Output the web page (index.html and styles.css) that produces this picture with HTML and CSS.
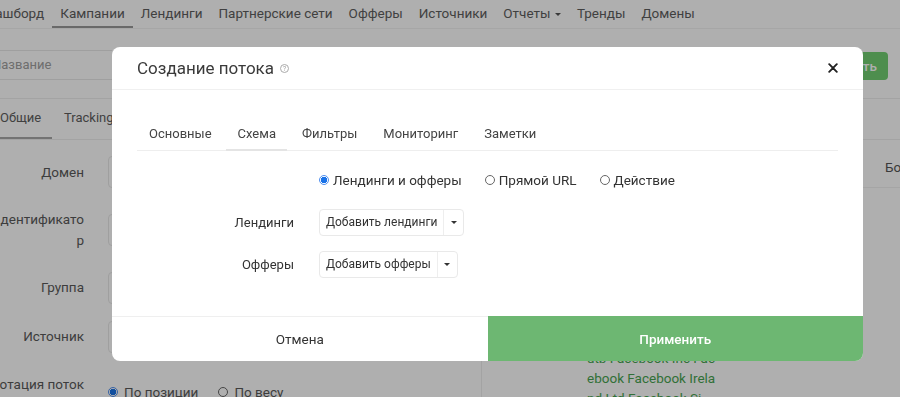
FILE: index.html
```html
<!DOCTYPE html>
<html lang="ru">
<head>
<meta charset="utf-8">
<title>Создание потока</title>
<link rel="stylesheet" href="styles.css">
</head>
<body>
<div class="page">
  <nav class="nav">
    <a class="nav-item first">Дашборд</a>
    <a class="nav-item active">Кампании</a>
    <a class="nav-item">Лендинги</a>
    <a class="nav-item">Партнерские сети</a>
    <a class="nav-item">Офферы</a>
    <a class="nav-item">Источники</a>
    <a class="nav-item">Отчеты <span class="caret-sm"></span></a>
    <a class="nav-item">Тренды</a>
    <a class="nav-item">Домены</a>
  </nav>
  <div class="toolbar">
    <div class="name-input">Название</div>
    <div class="spacer"></div>
    <div class="create-btn">Создать</div>
  </div>
  <div class="content">
    <div class="left">
      <div class="page-tabs">
        <div class="ptab active">Общие</div>
        <div class="ptab">Tracking</div>
      </div>
      <div class="frow first"><div class="flabel">Домен</div><div class="finput"></div></div>
      <div class="frow tall"><div class="flabel">Идентификатор</div><div class="finput"></div></div>
      <div class="frow"><div class="flabel">Группа</div><div class="finput"></div></div>
      <div class="frow"><div class="flabel">Источник</div><div class="finput"></div></div>
      <div class="frow top"><div class="flabel">Ротация потоков</div>
        <div class="bg-radios"><span class="radio checked"></span>По позиции<span class="radio gap"></span>По весу</div>
      </div>
    </div>
    <div class="right">
      <div class="rhead"></div>
      <div class="rth"><span class="rth-text">Бо</span></div>
      <div class="rbody">
        <div class="green-text">Facebook Ireland Ltd F<br>acebook Facebook Inc<br>utb Facebook Inc Fac<br>ebook Facebook Irela<br>nd Ltd Facebook Si</div>
      </div>
    </div>
  </div>
</div>
<div class="overlay"></div>
<div class="modal">
  <div class="modal-header">
    <span class="modal-title">Создание потока</span>
    <span class="help">?</span>
    <span class="grow"></span>
    <svg class="close" width="10" height="10" viewBox="0 0 10 10"><path d="M1.2 1.2L8.8 8.8M8.8 1.2L1.2 8.8" stroke="#222" stroke-width="1.9" stroke-linecap="round"/></svg>
  </div>
  <div class="modal-body">
    <div class="tabs">
      <div class="tab">Основные</div>
      <div class="tab active">Схема</div>
      <div class="tab">Фильтры</div>
      <div class="tab">Мониторинг</div>
      <div class="tab">Заметки</div>
    </div>
    <div class="mrow radios-row">
      <div class="mlabel"></div>
      <div class="radios">
        <label class="ropt"><span class="radio checked"></span>Лендинги и офферы</label>
        <label class="ropt"><span class="radio"></span>Прямой URL</label>
        <label class="ropt"><span class="radio"></span>Действие</label>
      </div>
    </div>
    <div class="mrow">
      <div class="mlabel">Лендинги</div>
      <div class="dd"><span class="dd-text">Добавить лендинги</span><span class="dd-caret"><span class="caret"></span></span></div>
    </div>
    <div class="mrow">
      <div class="mlabel">Офферы</div>
      <div class="dd"><span class="dd-text">Добавить офферы</span><span class="dd-caret"><span class="caret"></span></span></div>
    </div>
  </div>
  <div class="modal-footer">
    <div class="btn-cancel">Отмена</div>
    <div class="btn-apply">Применить</div>
  </div>
</div>
</body>
</html>
```
FILE: styles.css
```css
* { box-sizing: border-box; }
html, body { margin: 0; padding: 0; }
body {
  width: 900px;
  height: 397px;
  overflow: hidden;
  font-family: Roboto, "Noto Sans", "DejaVu Sans", sans-serif;
  font-size: 13px;
  color: #555;
  background: #fff;
}
.page { width: 900px; height: 397px; overflow: hidden; }

.nav {
  display: flex;
  height: 29px;
  border-bottom: 1px solid #f2f2f2;
  margin-left: -23px;
}
.nav-item {
  padding: 0 8px;
  line-height: 26px;
  font-size: 13.5px;
  color: #5e5e5e;
  border-bottom: 2px solid transparent;
  white-space: nowrap;
}
.nav-item.active { border-bottom-color: #9a9a9a; }
.caret-sm {
  display: inline-block;
  width: 0; height: 0;
  border-left: 3px solid transparent;
  border-right: 3px solid transparent;
  border-top: 3px solid #555;
  vertical-align: middle;
  margin-left: 1px;
}

.toolbar {
  display: flex;
  height: 70px;
  padding-top: 21px;
  align-items: flex-start;
  border-bottom: 1px solid #eee;
}
.name-input {
  width: 112px;
  height: 30px;
  border-top: 1px solid #e8e8e8;
  border-bottom: 1px solid #e8e8e8;
  line-height: 28px;
  color: #a0a0a0;
  font-size: 13px;
  text-indent: -8px;
}
.spacer { flex: 1; }
.create-btn {
  margin-top: 2px;
  width: 100px;
  height: 28px;
  margin-right: 12px;
  background: #72cf72;
  color: #fff;
  border-radius: 4px;
  line-height: 28px;
  text-align: right;
  padding-right: 11px;
  font-size: 13.5px;
  font-weight: 500;
}

.content { display: flex; }
.left { width: 482px; border-right: 1px solid #eee; height: 300px; }
.right { flex: 1; }

.page-tabs {
  display: flex;
  height: 41px;
  border-bottom: 1px solid #eee;
  margin-left: -4px;
}
.ptab {
  padding: 0 12px 0 4px;
  line-height: 38px;
  font-size: 13px;
  color: #5e5e5e;
  border-bottom: 2px solid transparent;
  margin-right: 8px;
}
.ptab.active { border-bottom-color: #a8a8a8; width: 56px; }

.frow {
  display: flex;
  align-items: center;
  height: 49px;
}
.frow.first { margin-top: 7px; height: 50px; }
.frow.tall { height: 66px; }
.frow.top { align-items: flex-start; padding-top: 13px; }
.flabel {
  width: 96px;
  margin-left: -12px;
  text-align: right;
  font-size: 13.5px;
  color: #5a5a5a;
  line-height: 21px;
  word-break: break-all;
  flex: none;
}
.finput {
  margin-left: 24px;
  width: 300px;
  height: 32px;
  border: 1px solid #e8e8e8;
  border-radius: 4px;
}
.bg-radios {
  margin-left: 24px;
  display: flex;
  align-items: center;
  font-size: 13.5px;
  padding-top: 10px;
  color: #5a5a5a;
}
.bg-radios .radio { margin-right: 6px; }
.bg-radios .radio.gap { margin-left: 20px; }

.rhead { height: 41px; border-bottom: 1px solid #eee; }
.rth {
  height: 48px;
  border-bottom: 1px solid #f0f0f0;
  position: relative;
}
.rth-text {
  position: absolute;
  left: 403px;
  top: 19px;
  font-size: 13.5px;
  color: #555;
}
.rbody { padding: 120px 0 0 105px; }
.green-text {
  color: #48a451;
  font-size: 13.5px;
  line-height: 20px;
}

.overlay {
  position: fixed;
  inset: 0;
  background: rgba(0, 0, 0, 0.315);
}

.modal {
  position: fixed;
  left: 112px;
  top: 47px;
  width: 751px;
  height: 314px;
  background: #fff;
  border-radius: 8px;
  overflow: hidden;
  display: flex;
  flex-direction: column;
  color: #333;
}
.modal-header {
  height: 43px;
  flex: none;
  display: flex;
  align-items: center;
  padding: 0 25px;
  border-bottom: 1px solid #f0f0f0;
}
.modal-title { font-size: 17px; color: #3a3a3a; }
.help {
  margin-left: 6px;
  width: 9px; height: 9px;
  border: 1px solid #aaa;
  border-radius: 50%;
  font-size: 6.5px;
  line-height: 8px;
  text-align: center;
  color: #999;
  margin-top: 1px;
}
.grow { flex: 1; }
.close { margin-right: 0; }

.modal-body {
  flex: 1;
  padding: 27px 25px 0;
}
.tabs {
  display: flex;
  height: 34px;
  border-bottom: 1px solid #eee;
}
.tab {
  padding: 0 11.5px;
  margin-right: 3px;
  line-height: 33px;
  font-size: 13px;
  color: #444;
  border-bottom: 2px solid transparent;
  margin-bottom: -1px;
}
.tab:first-child { padding-left: 12px; }
.tab.active { border-bottom-color: #e4e4e4; }

.mrow {
  display: flex;
  align-items: center;
  height: 42px;
}
.radios-row { margin-top: 8px; height: 42px; }
.mlabel {
  width: 157px;
  text-align: right;
  margin-right: 25px;
  font-size: 13px;
  color: #333;
  flex: none;
}
.radios { display: flex; align-items: center; }
.ropt {
  display: flex;
  align-items: center;
  margin-right: 23px;
  font-size: 13.5px;
  color: #333;
}
.radio {
  display: inline-block;
  width: 10px;
  height: 10px;
  border: 1px solid #666;
  border-radius: 50%;
  margin-right: 4px;
  flex: none;
}
.radio.checked {
  border-color: #4f8ff0;
  background: radial-gradient(circle, #1a73e8 0 3px, #fff 3.2px);
}
.dd {
  display: flex;
  align-items: center;
  height: 27px;
  border: 1px solid #e9e9e9;
  border-radius: 4px;
}
.dd-text {
  padding: 0 6px;
  font-size: 12px;
  color: #333;
  line-height: 25px;
}
.dd-caret {
  width: 20px;
  height: 25px;
  border-left: 1px solid #eee;
  display: flex;
  align-items: center;
  justify-content: center;
}
.caret {
  width: 0; height: 0;
  border-left: 3.5px solid transparent;
  border-right: 3.5px solid transparent;
  border-top: 3.5px solid #333;
}

.modal-footer {
  height: 45px;
  flex: none;
  display: flex;
  border-top: 1px solid #efefef;
}
.btn-cancel, .btn-apply {
  flex: 1;
  display: flex;
  align-items: center;
  justify-content: center;
  font-size: 13.5px;
}
.btn-cancel { color: #333; }
.btn-apply { background: #6db772; color: #fff; font-weight: 500; margin-top: -1px; }
```
